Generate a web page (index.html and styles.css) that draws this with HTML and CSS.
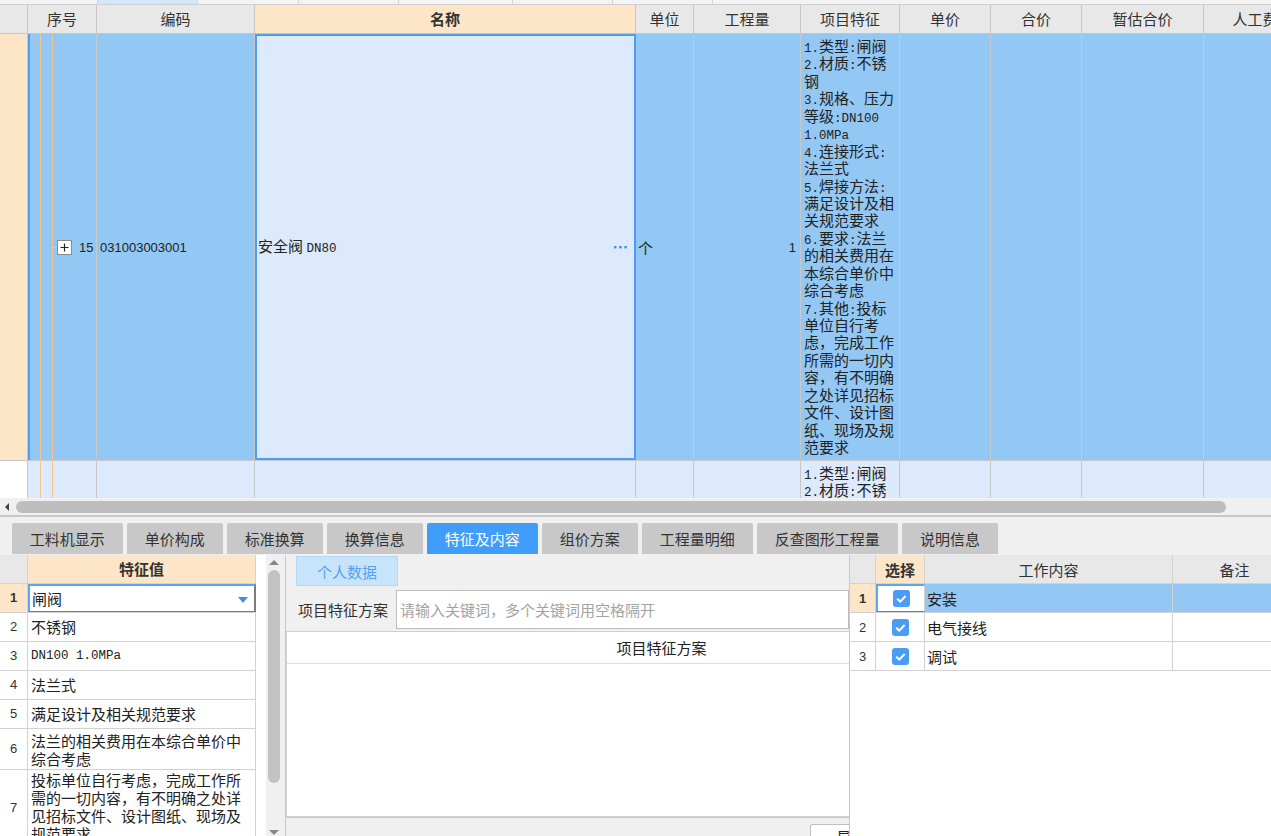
FILE: index.html
```html
<!DOCTYPE html>
<html lang="zh-CN">
<head>
<meta charset="utf-8">
<title>特征及内容</title>
<link rel="stylesheet" href="styles.css">
</head>
<body>
<div class="topstrip">
  <span class="s1"></span><span class="s2 on"></span><span class="s3"></span><span class="s4"></span><span class="s5"></span><span class="s6"></span><span class="s7"></span>
</div>
<div class="grid">
  <div class="trow head">
    <div class="c rh"></div>
    <div class="c">序号</div>
    <div class="c">编码</div>
    <div class="c hl b">名称</div>
    <div class="c">单位</div>
    <div class="c">工程量</div>
    <div class="c">项目特征</div>
    <div class="c">单价</div>
    <div class="c">合价</div>
    <div class="c">暂估合价</div>
    <div class="c">人工费</div>
  </div>
  <div class="trow r1">
    <div class="c rh orange"></div>
    <div class="c seq seledge">
      <span class="tline"></span>
      <svg class="plus" width="15" height="15" viewBox="0 0 15 15"><rect x="0.5" y="0.5" width="14" height="14" fill="#fff" stroke="#8c8c8c"/><path d="M3.5 7.5h8M7.5 3.5v8" stroke="#222" stroke-width="1.2"/></svg>
      <span class="num sn">15</span>
    </div>
    <div class="c code num">031003003001</div>
    <div class="c name"><span>安全阀 <span class="m">DN80</span></span><svg class="dots" width="13" height="3" viewBox="0 0 13 3"><rect x="0" y="0" width="2.4" height="2.4" fill="#3b8fe4"/><rect x="5.2" y="0" width="2.4" height="2.4" fill="#3b8fe4"/><rect x="10.4" y="0" width="2.4" height="2.4" fill="#3b8fe4"/></svg></div>
    <div class="c unit">个</div>
    <div class="c qty num">1</div>
    <div class="c feat">
      <div><span class="m">1.</span>类型<span class="m">:</span>闸阀</div>
      <div><span class="m">2.</span>材质<span class="m">:</span>不锈</div>
      <div>钢</div>
      <div><span class="m">3.</span>规格、压力</div>
      <div>等级<span class="m">:DN100</span></div>
      <div><span class="m">1.0MPa</span></div>
      <div><span class="m">4.</span>连接形式<span class="m">:</span></div>
      <div>法兰式</div>
      <div><span class="m">5.</span>焊接方法<span class="m">:</span></div>
      <div>满足设计及相</div>
      <div>关规范要求</div>
      <div><span class="m">6.</span>要求<span class="m">:</span>法兰</div>
      <div>的相关费用在</div>
      <div>本综合单价中</div>
      <div>综合考虑</div>
      <div><span class="m">7.</span>其他<span class="m">:</span>投标</div>
      <div>单位自行考</div>
      <div>虑，完成工作</div>
      <div>所需的一切内</div>
      <div>容，有不明确</div>
      <div>之处详见招标</div>
      <div>文件、设计图</div>
      <div>纸、现场及规</div>
      <div>范要求</div>
    </div>
    <div class="c"></div>
    <div class="c"></div>
    <div class="c"></div>
    <div class="c"></div>
  </div>
  <div class="trow r2">
    <div class="c rh white"></div>
    <div class="c seq"></div>
    <div class="c"></div>
    <div class="c"></div>
    <div class="c"></div>
    <div class="c"></div>
    <div class="c feat">
      <div><span class="m">1.</span>类型<span class="m">:</span>闸阀</div>
      <div><span class="m">2.</span>材质<span class="m">:</span>不锈</div>
      <div>钢</div>
    </div>
    <div class="c"></div>
    <div class="c"></div>
    <div class="c"></div>
    <div class="c"></div>
  </div>
</div>
<div class="hscroll">
  <span class="larrow"></span>
  <span class="hthumb"></span>
</div>
<div class="splitter"></div>
<div class="tabs">
  <div class="tab">工料机显示</div>
  <div class="tab">单价构成</div>
  <div class="tab">标准换算</div>
  <div class="tab">换算信息</div>
  <div class="tab active">特征及内容</div>
  <div class="tab">组价方案</div>
  <div class="tab">工程量明细</div>
  <div class="tab">反查图形工程量</div>
  <div class="tab">说明信息</div>
</div>
<div class="bottom">
  <div class="lp">
    <div class="lrow lhead">
      <div class="lc rhc"></div>
      <div class="lc hl b ctr">特征值</div>
    </div>
    <div class="lrow h29">
      <div class="lc rhc orange num b">1</div>
      <div class="lc focus"><span>闸阀</span><span class="tri"></span></div>
    </div>
    <div class="lrow h29">
      <div class="lc rhc num">2</div>
      <div class="lc">不锈钢</div>
    </div>
    <div class="lrow h29">
      <div class="lc rhc num">3</div>
      <div class="lc"><span class="m">DN100 1.0MPa</span></div>
    </div>
    <div class="lrow h29">
      <div class="lc rhc num">4</div>
      <div class="lc">法兰式</div>
    </div>
    <div class="lrow h29">
      <div class="lc rhc num">5</div>
      <div class="lc">满足设计及相关规范要求</div>
    </div>
    <div class="lrow h41">
      <div class="lc rhc num">6</div>
      <div class="lc multi">法兰的相关费用在本综合单价中<br>综合考虑</div>
    </div>
    <div class="lrow h76">
      <div class="lc rhc num">7</div>
      <div class="lc multi">投标单位自行考虑，完成工作所<br>需的一切内容，有不明确之处详<br>见招标文件、设计图纸、现场及<br>规范要求</div>
    </div>
  </div>
  <div class="vsb">
    <span class="uarrow"></span>
    <span class="vthumb"></span>
    <span class="vfill"></span>
    <span class="darrow"></span>
  </div>
  <div class="mp">
    <div class="mp-head"><div class="pbtn">个人数据</div></div>
    <div class="search">
      <div class="slabel">项目特征方案</div>
      <div class="sinput">请输入关键词，多个关键词用空格隔开</div>
    </div>
    <div class="mtable">
      <div class="mthead"><span></span><span class="mtitle">项目特征方案</span></div>
    </div>
    <div class="mfoot"><div class="fbtn">导入</div></div>
  </div>
  <div class="rp">
    <div class="rrow rhead">
      <div class="rc rhc"></div>
      <div class="rc hl b ctr">选择</div>
      <div class="rc ctr">工作内容</div>
      <div class="rc ctr">备注</div>
    </div>
    <div class="rrow sel">
      <div class="rc rhc orange num b">1</div>
      <div class="rc ctr focus chk"><svg width="17" height="17" viewBox="0 0 17 17"><rect width="17" height="17" rx="3" fill="#4a9df6"/><path d="M4.2 8.8l3 2.8 5.4-5.6" fill="none" stroke="#fff" stroke-width="2"/></svg></div>
      <div class="rc txt blue">安装</div>
      <div class="rc blue"></div>
    </div>
    <div class="rrow">
      <div class="rc rhc num">2</div>
      <div class="rc ctr chk"><svg width="17" height="17" viewBox="0 0 17 17"><rect width="17" height="17" rx="3" fill="#4a9df6"/><path d="M4.2 8.8l3 2.8 5.4-5.6" fill="none" stroke="#fff" stroke-width="2"/></svg></div>
      <div class="rc txt">电气接线</div>
      <div class="rc"></div>
    </div>
    <div class="rrow">
      <div class="rc rhc num">3</div>
      <div class="rc ctr chk"><svg width="17" height="17" viewBox="0 0 17 17"><rect width="17" height="17" rx="3" fill="#4a9df6"/><path d="M4.2 8.8l3 2.8 5.4-5.6" fill="none" stroke="#fff" stroke-width="2"/></svg></div>
      <div class="rc txt">调试</div>
      <div class="rc"></div>
    </div>
  </div>
</div>
</body>
</html>
```

FILE: styles.css
```css
* { box-sizing: border-box; margin: 0; padding: 0; }
html, body { width: 1271px; height: 836px; overflow: hidden; }
body {
  background: #f0f0f0;
  font-family: "Noto Sans CJK SC", "Noto Sans", sans-serif;
  font-size: 15px;
  color: #222;
}
.m { font-family: "Liberation Mono", "Noto Sans CJK SC", monospace; font-size: 12.5px; }
.num { font-family: "Liberation Sans", sans-serif; font-size: 13px; }
.b { font-weight: bold; }
.orange { background-color: #fde5c8 !important; }
.hl { background-color: #fde5c8 !important; }

/* top strip */
.topstrip { height: 4px; display: flex; background: #f4f4f4; }
.topstrip span { border-right: 1px solid #d4d4d4; height: 4px; }
.topstrip .s1 { width: 98px; }
.topstrip .s2 { width: 100px; }
.topstrip .s3 { width: 101px; }
.topstrip .s4 { width: 100px; }
.topstrip .s5 { width: 114px; }
.topstrip .s6 { width: 100px; }
.topstrip .s7 { width: 100px; }
.topstrip .on { background: #d3e8fa; }

/* main grid */
.grid {
  --cols: 28px 69px 158px 381px 58px 107px 99px 91px 91px 122px 103px;
  height: 494px;
  overflow: hidden;
  background: #fff;
}
.trow { display: grid; grid-template-columns: var(--cols); width: 1307px; }
.trow .c { border-right: 1px solid #c8c8c8; overflow: hidden; display: flex; align-items: center; }
.head { height: 30px; background: #e8e8e8; border-top: 1px solid #d0d0d0; border-bottom: 1px solid #c4c4c4; color: #333; }
.head .c { justify-content: center; line-height: 20px; }
.r1 { height: 427px; border-bottom: 1px solid #c8c8c8; }
.r1 .c { background-color: #93c8f5; }
.r2 { height: 40px; }
.r2 .c { background-color: #dde9fc; }
.r2 .c.white { background-color: #fff; }
.head .rh { background-color: #e8e8e8; }

.trow .seq {
  background-image: linear-gradient(#f3c48b, #f3c48b), linear-gradient(#f3c48b, #f3c48b);
  background-size: 1px 100%, 1px 100%;
  background-position: 12px 0, 24px 0;
  background-repeat: no-repeat;
  padding-left: 24px;
}
.seledge { box-shadow: inset 2px 0 0 #4d9ef3; }
.tline { width: 5px; height: 1px; background: #f3c48b; }
.plus { display: block; flex: none; }
.sn { margin-left: 7px; }
.code { padding-left: 3px; }
.r1 .name {
  background-color: #dde9fc;
  border: 2px solid #4d9ef3;
  justify-content: space-between;
  padding: 0 7px 0 1px;
  line-height: 20px;
}
.dots { display: block; }
.unit { padding-left: 2px; }
.qty { justify-content: flex-end; padding-right: 4px; }
.trow .feat {
  display: block;
  padding: 3px 0 0 3px;
  line-height: 17.45px;
  white-space: nowrap;
  color: #222;
}
.feat div { height: 17.45px; }

/* horizontal scrollbar */
.hscroll {
  height: 17px;
  background: #f0f0f0;
  display: flex;
  align-items: center;
  padding-left: 5px;
}
.larrow {
  width: 0; height: 0;
  border-top: 4px solid transparent;
  border-bottom: 4px solid transparent;
  border-right: 4px solid #444;
}
.hthumb {
  margin-left: 7px;
  width: 1210px;
  height: 12px;
  border-radius: 6px;
  background: #bebebe;
}
.splitter { height: 2px; background: #c8c8c8; }

/* tabs */
.tabs { display: flex; gap: 4.5px; padding: 6px 0 0 12px; height: 37px; }
.tab {
  height: 31px;
  line-height: 31px;
  padding: 0 17.75px;
  background: #c8c8c8;
  color: #333;
  border-radius: 2px 2px 0 0;
  white-space: nowrap;
}
.tab.active { background: #409dfb; color: #fff; }

/* bottom */
.bottom { display: flex; height: 281px; margin-top: 1px; }

.lp { width: 266px; background: #fff; overflow: hidden; }
.lrow { display: grid; grid-template-columns: 28px 228px; border-bottom: 1px solid #d2d2d2; width: 256px; }
.lc { border-right: 1px solid #d2d2d2; display: flex; align-items: center; padding-left: 3px; overflow: hidden; white-space: nowrap; line-height: 18px; }
.lhead { height: 29px; background: #e8e8e8; }
.lhead .lc { color: #333; }
.ctr { justify-content: center; padding-left: 0; }
.rhc { justify-content: center; padding-left: 0; color: #333; }
.h29 { height: 29px; }
.h41 { height: 41px; }
.h76 { height: 76px; }
.multi { align-items: flex-start; padding-top: 1px; }
.h41 .multi { padding-top: 3px; }
.focus {
  border-top: 2px solid #5aa6f2;
  border-left: 2px solid #5aa6f2;
  border-right: 2px solid #7d7d7d;
  border-bottom: 1px solid #7d7d7d;
  background: #fff;
}
.lc.focus { justify-content: space-between; padding-right: 6px; padding-left: 2px; }
.tri {
  width: 0; height: 0;
  border-left: 5.5px solid transparent;
  border-right: 5.5px solid transparent;
  border-top: 6px solid #4a8ed8;
  margin-top: 2px;
}

.vsb { width: 16px; background: #f0f0f0; display: flex; flex-direction: column; align-items: center; padding-top: 5px; }
.uarrow { width: 0; height: 0; border-left: 5px solid transparent; border-right: 5px solid transparent; border-bottom: 5px solid #888; }
.vthumb { width: 12px; height: 213px; margin-top: 5px; border-radius: 6px; background: #c2c2c2; }
.vfill { flex: 1; }
.darrow { width: 0; height: 0; border-left: 5px solid transparent; border-right: 5px solid transparent; border-top: 5px solid #888; margin-bottom: 1px; }

.mp {
  width: 564px;
  margin-left: 3px;
  background: #f0f0f0;
  border-left: 1px solid #c8c8c8;
  display: flex;
  flex-direction: column;
}
.mp-head { height: 35px; padding: 1px 0 0 10px; }
.pbtn {
  width: 102px; height: 30px;
  background: #c8e4fb;
  border: 1px solid #b3d7f6;
  color: #4fa4f4;
  display: flex; align-items: center; justify-content: center;
}
.search { display: flex; height: 39px; }
.slabel { width: 110px; padding-left: 12px; display: flex; align-items: center; color: #333; white-space: nowrap; }
.sinput {
  flex: 1;
  background: #fff;
  border: 1px solid #bdbdbd;
  color: #a3a3a3;
  display: flex; align-items: center;
  padding-left: 3px;
  white-space: nowrap;
}
.mtable { margin-top: 2px; height: 186px; background: #fff; border: 1px solid #d0d0d0; border-right: none; }
.mthead { height: 32px; display: grid; grid-template-columns: 187px 1fr; border-bottom: 1px solid #dcdcdc; align-items: center; }
.mtitle { text-align: center; color: #222; }
.mfoot { flex: 1; border-top: 1px solid #c8c8c8; padding: 6px 0 0 524px; overflow: hidden; }
.fbtn {
  width: 60px; height: 24px;
  background: #fff;
  border: 1px solid #bdbdbd;
  border-radius: 2px;
  padding-left: 26px;
  line-height: 22px;
  white-space: nowrap;
  font-size: 14px;
}

.rp { flex: 1; background: #fff; border-left: 1px solid #c8c8c8; overflow: hidden; }
.rrow { display: grid; grid-template-columns: 26px 49px 248px 124px; height: 29px; border-bottom: 1px solid #d2d2d2; width: 447px; }
.rc { border-right: 1px solid #d2d2d2; display: flex; align-items: center; overflow: hidden; white-space: nowrap; }
.rhead { background: #e8e8e8; }
.rhead .rc { color: #333; }
.txt { padding-left: 2px; }
.blue { background: #93c8f5; }
.chk svg { display: block; }
.rc.focus { border-bottom: 1px solid #7d7d7d; }
```
